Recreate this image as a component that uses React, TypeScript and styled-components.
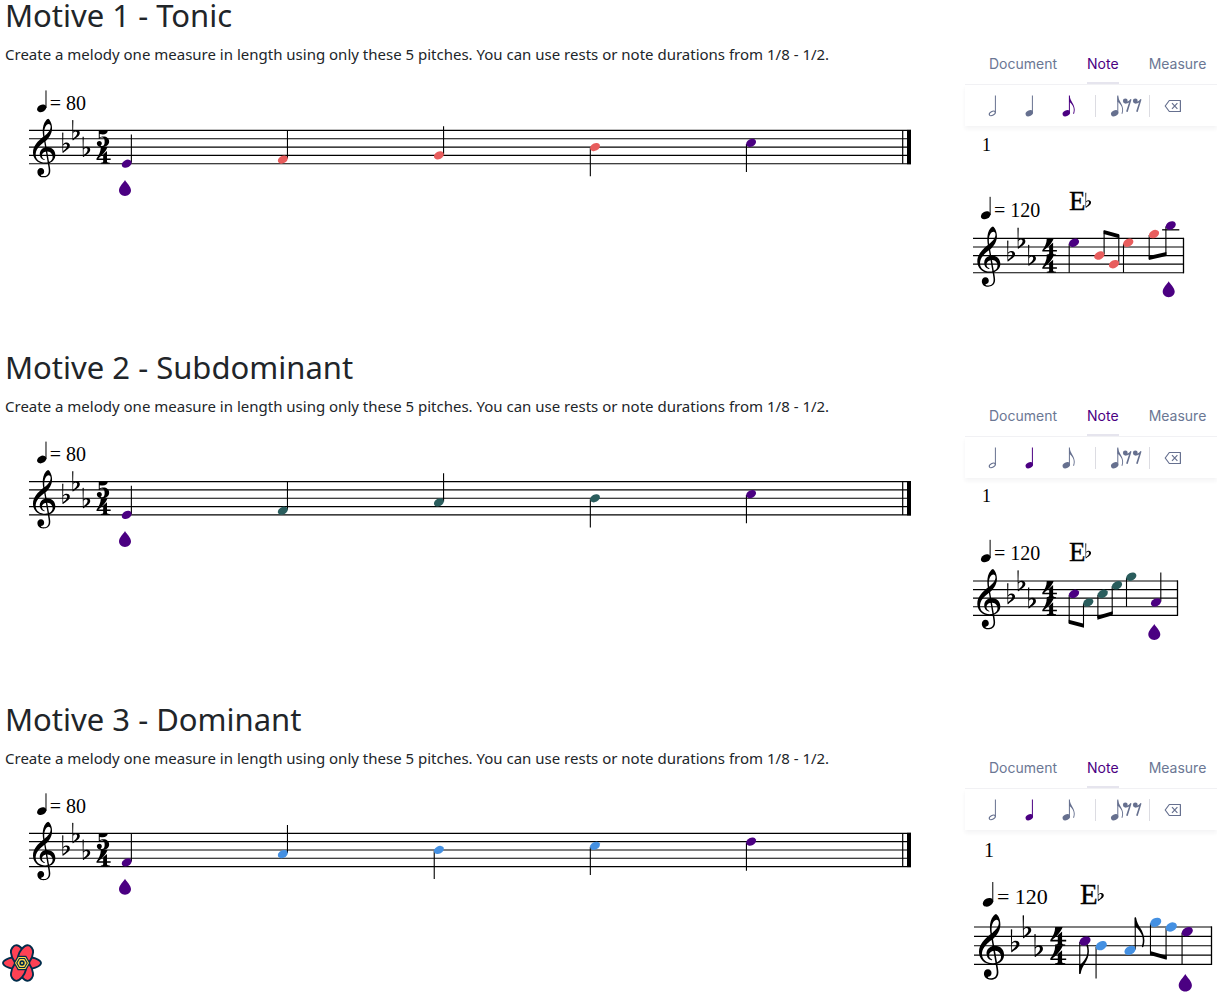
import React, { useState } from "react";
import styled, { createGlobalStyle } from "styled-components";

const INDIGO = "#4b0082";
const CORAL = "#e85d5d";
const TEAL = "#2a5d5d";
const BLUE = "#4490e2";
const SLATE = "#66708f";

const GlobalStyle = createGlobalStyle`
  *, *::before, *::after { box-sizing: border-box; }
  body {
    margin: 0;
    background: #fff;
    color: #212529;
    font-family: "Noto Sans", sans-serif;
  }
`;

const Page = styled.main`
  display: flex;
  flex-direction: column;
  gap: 62px;
  padding-left: 5px;
`;

const Exercise = styled.section`
  display: grid;
  grid-template-columns: minmax(0, 1fr) 252px;
`;

const Prompt = styled.div`
  display: flex;
  flex-direction: column;
`;

const Title = styled.h2`
  margin: 0 0 12px;
  font-size: 31px;
  line-height: 31px;
  font-weight: 400;
`;

const Instructions = styled.p`
  margin: 0;
  font-size: 15px;
  line-height: 22px;
`;

const Editor = styled.div`
  display: flex;
  flex-direction: column;
  padding-top: 52px;
`;

const Tabs = styled.div`
  display: flex;
  gap: 30px;
  height: 33px;
  padding-left: 24px;
  border-bottom: 1px solid #f1f1f4;
`;

const Tab = styled.button<{ $active: boolean }>`
  padding: 0 0 7px;
  border: 0;
  border-bottom: 2px solid ${(p) => (p.$active ? "#e6e5ee" : "transparent")};
  background: none;
  color: ${(p) => (p.$active ? INDIGO : "#6b7794")};
  font-family: Inter, sans-serif;
  font-size: 14px;
  line-height: 23px;
  white-space: nowrap;
  cursor: pointer;
`;

const Toolbar = styled.div`
  display: flex;
  align-items: center;
  height: 41px;
  padding-left: 21px;
  margin-bottom: 2px;
  box-shadow: 0 3px 4px rgba(30, 30, 60, 0.05);
`;

const Durations = styled.div`
  display: flex;
  gap: 13px;
`;

const Tool = styled.button<{ $active?: boolean }>`
  display: flex;
  padding: 0;
  border: 0;
  background: none;
  color: ${(p) => (p.$active ? INDIGO : SLATE)};
  cursor: pointer;
`;

const Divider = styled.span<{ $before: number; $after: number }>`
  width: 1px;
  height: 22px;
  margin: 0 ${(p) => p.$after}px 0 ${(p) => p.$before}px;
  background: #dcdce2;
`;

const Sheet = styled.svg`
  display: block;
  width: 100%;
  height: auto;
  overflow: visible;
`;

const Engraved = styled.text`
  font-family: "Liberation Serif", serif;
  fill: #000;
`;

const DevtoolsButton = styled.button`
  position: fixed;
  left: 2px;
  bottom: 11px;
  display: flex;
  padding: 0;
  border: 0;
  background: none;
  cursor: pointer;
`;

/* Music glyphs: 250 units to one staff space, y axis pointing up. */
const CLEF =
  "M364 -252c-245 0 -364 165 -364 339c0 202 153 345 297 464c12 10 11 12 9 24c-7 41 -14 106 -14 164c0 104 24 229 98 311c20 22 51 48 65 48c11 0 37 -28 52 -50c41 -60 65 -146 65 -233c0 -153 -82 -280 -190 -381c-6 -6 -8 -7 -6 -19l25 -145c3 -18 3 -18 29 -18c147 0 241 -113 241 -241c0 -113 -67 -198 -168 -238c-14 -6 -15 -5 -13 -17c11 -62 29 -157 29 -214c0 -170 -130 -200 -197 -200c-151 0 -190 98 -190 163c0 62 40 115 107 115c61 0 96 -47 96 -102c0 -58 -36 -85 -67 -94c-23 -7 -32 -10 -32 -17c0 -13 26 -29 80 -29c59 0 158 18 158 168c0 47 -15 134 -27 201c-2 12 -4 11 -15 9c-20 -4 -46 -6 -68 -6z" +
  "M80 20c0 -139 113 -236 288 -236c20 0 40 2 56 5c15 3 16 3 14 14l-50 298c-2 11 -4 12 -20 8c-61 -17 -100 -60 -100 -117c0 -46 30 -89 72 -107c7 -3 15 -6 15 -13c0 -6 -4 -11 -12 -11c-7 0 -19 3 -27 6c-68 23 -115 87 -115 177c0 85 57 164 145 194c18 6 18 5 15 24l-21 128c-2 11 -4 12 -14 4c-47 -38 -93 -75 -153 -142c-83 -94 -93 -173 -93 -232z" +
  "M470 943c-61 0 -133 -96 -133 -252c0 -32 2 -66 6 -92c2 -13 6 -14 13 -8c79 69 174 159 174 270c0 55 -27 82 -60 82z" +
  "M441 117c-12 1 -13 -2 -11 -14l49 -285c2 -12 4 -12 16 -6c56 28 94 79 94 142c0 88 -67 156 -148 163z";
const FLAT =
  "M-4 432Q14 444 32 432L24 88C60 125 100 135 132 135C190 135 226 95 226 45C226 -50 120 -95 30 -168Q16 -180 6 -168Z" +
  "M26 40C26 60 60 95 98 95C130 95 146 70 146 40C146 -10 90 -70 24 -115Z";
const FOUR =
  "M130 250L330 250C290 120 160 -10 55 -90L200 -90L200 30L315 130L315 -90L425 -90L425 -135L315 -135L315 -190Q320 -215 400 -220L400 -250L130 -250L130 -220Q195 -215 200 -190L200 -135L0 -135L0 -95C70 0 130 110 130 250Z";
const FIVE =
  "M68 250Q200 225 340 250C335 170 270 130 190 130Q140 130 98 142L98 40C130 60 160 70 205 70C310 70 380 10 380 -85C380 -190 290 -250 170 -250C80 -250 10 -210 10 -140C10 -95 40 -65 85 -65C130 -65 160 -95 160 -135C160 -170 140 -190 120 -205C140 -218 150 -218 165 -218C220 -218 245 -170 245 -90C245 -5 215 35 170 35C130 35 100 20 88 -5L68 -5Z";
const FLAG =
  "M238 -790c-5 -17 -22 -23 -28 -19s-16 13 -16 29c0 4 1 9 3 15c17 45 24 92 24 137c0 59 -9 116 -24 150c-36 85 -131 221 -197 233v239c0 12 8 15 19 15c10 0 18 -6 21 -22c16 -96 58 -182 109 -261c63 -100 115 -218 115 -343c0 -78 -26 -173 -26 -173z";

interface GlyphProps {
  d: string;
  x: number;
  y: number;
  space: number;
  mirror?: boolean;
}

const Glyph = ({ d, x, y, space, mirror }: GlyphProps) => {
  const k = space / 250;
  return <path d={d} fillRule="evenodd" transform={`translate(${x} ${y}) scale(${k} ${mirror ? k : -k})`} />;
};

const Head = ({ x, y, space }: { x: number; y: number; space: number }) => (
  <ellipse rx={space * 0.63} ry={space * 0.45} transform={`translate(${x} ${y}) rotate(-28)`} />
);

const Drop = ({ x, y, scale = 1 }: { x: number; y: number; scale?: number }) => (
  <path
    fill={INDIGO}
    transform={`translate(${x} ${y}) scale(${scale})`}
    d="M0 0C1.5 3 6 6.5 6 10.3C6 13.6 3.3 16 0 16S-6 13.6 -6 10.3C-6 6.5 -1.5 3 0 0Z"
  />
);

interface NoteSpec {
  x: number;
  /* half spaces below the top staff line */
  step: number;
  color: string;
  up?: boolean;
  stemTo?: number;
  flag?: boolean;
}

interface BeamSpec {
  x1: number;
  y1: number;
  x2: number;
  y2: number;
}

interface ScoreSpec {
  width: number;
  height: number;
  left: number;
  right: number;
  top: number;
  space: number;
  clefX: number;
  flatsX: number[];
  meterX: number;
  beats: 4 | 5;
  final?: boolean;
  tempo: { x: number; rise: number; size: number; value: number };
  chord?: { x: number; rise: number; size: number };
  bar?: { x: number; y: number; size: number };
  notes: NoteSpec[];
  beams?: BeamSpec[];
  cursor: { x: number; y: number; scale?: number };
}

const Score = ({ score, label }: { score: ScoreSpec; label: string }) => {
  const { left, right, top, space, tempo, chord, bar } = score;
  const yAt = (step: number) => top + (step * space) / 2;
  const stem = space * 0.56;
  const tempoY = top - tempo.rise;
  return (
    <Sheet viewBox={`0 0 ${score.width} ${score.height}`} role="img" aria-label={label}>
      {bar && (
        <Engraved x={bar.x} y={bar.y} fontSize={bar.size}>
          1
        </Engraved>
      )}
      <Head x={tempo.x - 0.3} y={tempoY - 1.7} space={space * 0.94} />
      <path
        d={`M${tempo.x + space * 0.48} ${tempoY - 2}V${tempoY - space * 2.35}`}
        stroke="#000"
        strokeWidth={1}
      />
      <Engraved x={tempo.x + space * 0.92} y={tempoY} fontSize={tempo.size}>
        = {tempo.value}
      </Engraved>
      {chord && (
        <>
          <Engraved x={chord.x} y={top - chord.rise} fontSize={chord.size} stroke="#000" strokeWidth={0.3}>
            E
          </Engraved>
          <Glyph d={FLAT} x={chord.x + chord.size * 0.61} y={top - chord.rise - space * 0.8} space={space * 0.72} />
        </>
      )}
      <g stroke="#000" strokeWidth={1.15}>
        {[0, 2, 4, 6, 8].map((s) => (
          <path key={s} d={`M${left} ${yAt(s)}H${right}`} />
        ))}
      </g>
      <Glyph d={CLEF} x={score.clefX} y={yAt(6)} space={space} />
      {score.flatsX.map((x, i) => (
        <Glyph key={x} d={FLAT} x={x} y={yAt([4, 1, 5][i])} space={space} />
      ))}
      <Glyph d={score.beats === 5 ? FIVE : FOUR} x={score.meterX} y={yAt(2)} space={space} />
      <Glyph d={FOUR} x={score.meterX} y={yAt(6)} space={space} />
      {score.notes.map((n) => {
        const y = yAt(n.step);
        const sx = n.x + (n.up ? stem : -stem);
        const end = n.stemTo ?? y + (n.up ? -3.5 : 3.5) * space;
        return (
          <g key={n.x}>
            {n.step < -1 && (
              <path d={`M${n.x - space} ${yAt(-2)}h${space * 2}`} stroke="#000" strokeWidth={1.3} />
            )}
            <path d={`M${sx} ${y + (n.up ? -1 : 1)}V${end}`} stroke="#000" strokeWidth={1.1} />
            {n.flag && <Glyph d={FLAG} x={sx - 0.5} y={end} space={space * 0.98} mirror={!n.up} />}
            <g fill={n.color}>
              <Head x={n.x} y={y} space={space} />
            </g>
          </g>
        );
      })}
      {score.beams?.map((b) => (
        <path key={b.x1} d={`M${b.x1} ${b.y1}L${b.x2} ${b.y2}v4L${b.x1} ${b.y1 + 4}Z`} />
      ))}
      {score.final ? (
        <>
          <path d={`M${right - 8.3} ${top}V${yAt(8)}`} stroke="#000" strokeWidth={1.2} />
          <path d={`M${right - 2} ${top - 0.5}V${yAt(8) + 0.5}`} stroke="#000" strokeWidth={4} />
        </>
      ) : (
        <path d={`M${right - 0.5} ${top - 0.5}V${yAt(8) + 0.5}`} stroke="#000" strokeWidth={1.3} />
      )}
      <Drop {...score.cursor} />
    </Sheet>
  );
};

const promptScore = (top: number, cursorY: number, color: string, steps: number[]): ScoreSpec => ({
  width: 960,
  height: 140,
  left: 24,
  right: 906,
  top,
  space: 8.33,
  clefX: 28,
  flatsX: [57.3, 67.3, 77.7],
  meterX: 91.5,
  beats: 5,
  final: true,
  tempo: { x: 37, rise: 20.4, size: 20, value: 80 },
  notes: steps.map((step, i) => ({
    x: 121.7 + i * 156.1,
    step,
    up: step > 4,
    color: i === 0 || i === 4 ? INDIGO : color,
  })),
  cursor: { x: 120, y: cursorY },
});

const smallStaff = {
  width: 252,
  height: 162,
  left: 8,
  clefX: 12.3,
  flatsX: [42.3, 52.6, 63.2],
  meterX: 77.3,
  beats: 4 as const,
};

type Duration = "half" | "quarter" | "eighth";

interface Motive {
  title: string;
  duration: Duration;
  prompt: ScoreSpec;
  answer: ScoreSpec;
}

const motives: Motive[] = [
  {
    title: "Motive 1 - Tonic",
    duration: "eighth",
    prompt: promptScore(65.4, 115, CORAL, [8, 7, 6, 4, 3]),
    answer: {
      ...smallStaff,
      right: 219,
      top: 110.4,
      space: 8.58,
      tempo: { x: 21, rise: 21.4, size: 20, value: 120 },
      chord: { x: 104, rise: 28, size: 27 },
      bar: { x: 17, y: 23, size: 18 },
      notes: [
        { x: 109, step: 1, color: INDIGO },
        { x: 134.3, step: 4, color: CORAL, up: true, stemTo: 103 },
        { x: 149, step: 6, color: CORAL, up: true, stemTo: 107 },
        { x: 163.3, step: 1, color: CORAL },
        { x: 189, step: -1, color: CORAL, stemTo: 131 },
        { x: 205.7, step: -3, color: INDIGO, stemTo: 127 },
      ],
      beams: [
        { x1: 138.7, y1: 102, x2: 154.2, y2: 106.3 },
        { x1: 183.8, y1: 128, x2: 201.4, y2: 124 },
      ],
      cursor: { x: 203.7, y: 153.3 },
    },
  },
  {
    title: "Motive 2 - Subdominant",
    duration: "quarter",
    prompt: promptScore(64.6, 114, TEAL, [8, 7, 5, 4, 3]),
    answer: {
      ...smallStaff,
      right: 213,
      top: 101,
      space: 8.58,
      tempo: { x: 21, rise: 21, size: 20, value: 120 },
      chord: { x: 104, rise: 20, size: 27 },
      bar: { x: 17, y: 22, size: 18 },
      notes: [
        { x: 109, step: 3, color: INDIGO, stemTo: 143 },
        { x: 123.3, step: 5, color: TEAL, stemTo: 146 },
        { x: 137.7, step: 3, color: TEAL, stemTo: 138 },
        { x: 152, step: 1, color: TEAL, stemTo: 134 },
        { x: 166.3, step: -1, color: TEAL },
        { x: 191, step: 5, color: INDIGO, up: true },
      ],
      beams: [
        { x1: 103.7, y1: 139.7, x2: 119, y2: 143.7 },
        { x1: 132.4, y1: 135.7, x2: 147.7, y2: 131.3 },
      ],
      cursor: { x: 189.3, y: 144 },
    },
  },
  {
    title: "Motive 3 - Dominant",
    duration: "quarter",
    prompt: promptScore(64.3, 109.7, BLUE, [7, 5, 4, 3, 2]),
    answer: {
      ...smallStaff,
      left: 9,
      right: 247,
      top: 95,
      space: 9.35,
      clefX: 14,
      flatsX: [46, 57.8, 69.5],
      meterX: 85.3,
      tempo: { x: 23.3, rise: 23, size: 22, value: 120 },
      chord: { x: 115, rise: 23, size: 29 },
      bar: { x: 19, y: 25, size: 20 },
      notes: [
        { x: 120, step: 3, color: INDIGO, flag: true },
        { x: 136.3, step: 4, color: BLUE },
        { x: 165, step: 5, color: BLUE, up: true, flag: true },
        { x: 190.7, step: -1, color: BLUE, stemTo: 122 },
        { x: 206.3, step: 0, color: BLUE, stemTo: 127 },
        { x: 222.3, step: 1, color: INDIGO },
      ],
      beams: [{ x1: 185, y1: 119, x2: 201.7, y2: 123.7 }],
      cursor: { x: 220.3, y: 142, scale: 1.1 },
    },
  },
];

const DurationIcon = ({ kind }: { kind: Duration }) => (
  <svg width="24" height="24" viewBox="0 0 24 24" fill="currentColor" aria-hidden="true">
    {kind === "half" ? (
      <ellipse rx="3.3" ry="1.9" fill="none" stroke="currentColor" strokeWidth="1.1" transform="translate(6.3 19.3) rotate(-30)" />
    ) : (
      <Head x={6.3} y={19.3} space={6.2} />
    )}
    <path d="M9.4 18.5V1.5" stroke="currentColor" strokeWidth="1" />
    {kind === "eighth" && <Glyph d={FLAG} x={9} y={2.5} space={5.4} />}
  </svg>
);

const REST = "M3.6 3.6C4.6 4.2 6.4 3.2 7.9 1L9 1.4L5.2 14L3.6 13.6L6.5 4.6C4.8 5.6 2.9 5.7 1.6 5Z";

const RestsIcon = () => (
  <svg width="36" height="24" viewBox="0 0 36 24" fill="currentColor" aria-hidden="true">
    <Head x={6.7} y={19.3} space={6.2} />
    <path d="M9.8 18.5V1.5" stroke="currentColor" strokeWidth="1" />
    <Glyph d={FLAG} x={9.4} y={2.5} space={5.4} />
    {[14.5, 24.5].map((x) => (
      <g key={x} transform={`translate(${x} 4)`}>
        <circle cx="2.8" cy="3" r="2.4" />
        <path d={REST} />
      </g>
    ))}
  </svg>
);

const EraseIcon = () => (
  <svg width="18" height="14" viewBox="0 0 18 14" fill="none" stroke="currentColor" strokeWidth="1.2" aria-hidden="true">
    <path d="M5.3 1.5H16.4V12.5H5.3L1.2 7Z" strokeLinejoin="round" />
    <path d="M8 4.2L13.4 9.8M13.4 4.2L8 9.8" />
  </svg>
);

const SIDE_PETAL = "M4 -6.2C9 -6.8 18.8 -3.6 19 0C18.8 3.6 9 6.8 4 6.2Z";
const PETAL = "M4 -6.6C9 -8 16.5 -6.6 18.4 -3.4C19.6 -0.6 17.6 3.6 14.6 4.8C11 6.4 7 6.4 4 6Z";
const hexagon = (r: number) =>
  [0, 60, 120, 180, 240, 300]
    .map((a) => `${r * Math.cos((a * Math.PI) / 180)},${r * Math.sin((a * Math.PI) / 180)}`)
    .join(" ");

const FlowerLogo = () => (
  <svg width="40" height="40" viewBox="-20 -20 40 40" aria-hidden="true">
    <g fill="#ff4154" stroke="#002c4b" strokeWidth="1.9" strokeLinejoin="round">
      {[0, 180].map((a) => (
        <path key={a} d={SIDE_PETAL} transform={`rotate(${a})`} />
      ))}
      {[62, 242].map((a) => (
        <path key={a} d={PETAL} transform={`rotate(${a}) scale(1 -1)`} />
      ))}
      {[118, 298].map((a) => (
        <path key={a} d={PETAL} transform={`rotate(${a})`} />
      ))}
    </g>
    <polygon points={hexagon(8.4)} fill="#002c4b" />
    <polygon points={hexagon(7)} fill="#ffd94c" />
    <polygon points={hexagon(5.2)} fill="none" stroke="#002c4b" strokeWidth="1.1" />
    <circle r="2.7" fill="#002c4b" />
    <circle r="1.1" fill="#ffd94c" />
  </svg>
);

const tabNames = ["Document", "Note", "Measure"];
const durations: Duration[] = ["half", "quarter", "eighth"];

const MotiveExercise = ({ motive }: { motive: Motive }) => {
  const [tab, setTab] = useState("Note");
  const [duration, setDuration] = useState<Duration>(motive.duration);
  return (
    <Exercise>
      <Prompt>
        <Title>{motive.title}</Title>
        <Instructions>
          Create a melody one measure in length using only these 5 pitches. You can use rests or note durations from 1/8
          - 1/2.
        </Instructions>
        <Score score={motive.prompt} label={`${motive.title} pitches`} />
      </Prompt>
      <Editor>
        <Tabs role="tablist">
          {tabNames.map((name) => (
            <Tab key={name} type="button" role="tab" aria-selected={tab === name} $active={tab === name} onClick={() => setTab(name)}>
              {name}
            </Tab>
          ))}
        </Tabs>
        <Toolbar>
          <Durations>
            {durations.map((d) => (
              <Tool key={d} type="button" aria-label={`${d} note`} $active={d === duration} onClick={() => setDuration(d)}>
                <DurationIcon kind={d} />
              </Tool>
            ))}
          </Durations>
          <Divider $before={11} $after={12} />
          <Tool type="button" aria-label="Fill with rests">
            <RestsIcon />
          </Tool>
          <Divider $before={5} $after={14} />
          <Tool type="button" aria-label="Erase">
            <EraseIcon />
          </Tool>
        </Toolbar>
        <Score score={motive.answer} label={`${motive.title} melody`} />
      </Editor>
    </Exercise>
  );
};

export default function App() {
  return (
    <>
      <GlobalStyle />
      <Page>
        {motives.map((m) => (
          <MotiveExercise key={m.title} motive={m} />
        ))}
      </Page>
      <DevtoolsButton type="button" aria-label="Open query devtools">
        <FlowerLogo />
      </DevtoolsButton>
    </>
  );
}
